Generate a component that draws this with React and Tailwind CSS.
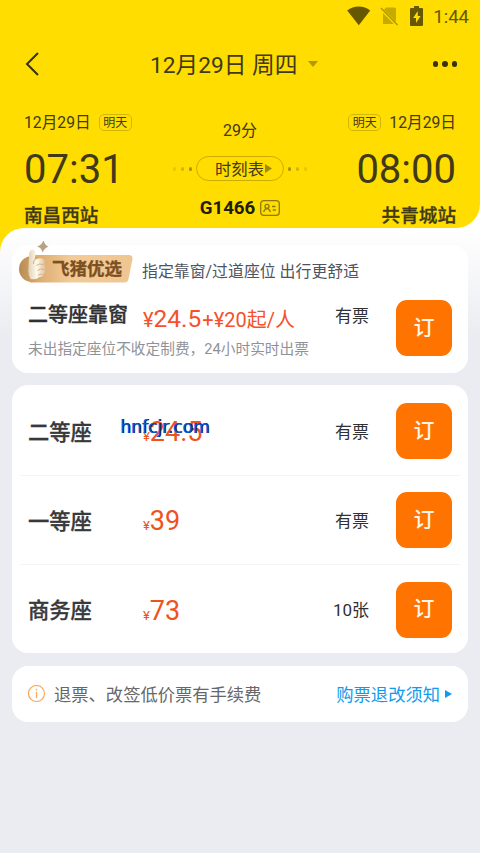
import React from 'react';

const seats = [
  { name: '二等座', price: '24.5', stock: '有票', watermark: true },
  { name: '一等座', price: '39', stock: '有票' },
  { name: '商务座', price: '73', stock: '10张' },
];

function StatusBar() {
  return (
    <div className="flex h-8 items-center justify-end pr-[11px] text-[#665800]">
      <svg className="mr-[9px] h-5 w-6" viewBox="0 0 24 20" fill="currentColor">
        <path d="M0.2 4.5C3.5 1.8 7.6.5 11.8.5s8.200 1.300 11.400 4L11.800 19.300z" />
      </svg>
      <svg className="mr-[12px] h-5 w-[18px]" viewBox="0 0 18 20" fill="none">
        <path d="M6 1.500h8.500q1.500 0 1.500 1.500v15H3V5z" fill="#c5ab00" />
        <path d="M.5 2.500L17.300 19.300" stroke="#ffdd00" strokeWidth="3" />
        <path d="M1 2L17.500 19" stroke="#ad9600" strokeWidth="1.300" />
      </svg>
      <svg className="mr-[10px] h-5 w-[13px]" viewBox="0 0 13 20">
        <path d="M4 0h5v2h3q1 0 1 1v16q0 1-1 1H1q-1 0-1-1V3q0-1 1-1h3z" fill="#665800" />
        <path d="M7.800 5L3 12h3v5l4.600-7H7.800z" fill="#ffdd00" />
      </svg>
      <span className="pt-[2px] text-[18.500px] leading-5">1:44</span>
    </div>
  );
}

function Badge() {
  return (
    <span className="flex h-[17px] w-[33px] items-center justify-center rounded-[5px] border border-[#d2b70b] pt-px text-[12px] leading-none">
      明天
    </span>
  );
}

function Dots({ flip }) {
  return (
    <span className={flip ? 'flex rotate-180 gap-[5px]' : 'flex gap-[5px]'}>
      <i className="h-1 w-[3px] rounded-full bg-[#e6c800]" />
      <i className="h-1 w-[3px] rounded-full bg-[#d2b600]" />
      <i className="h-1 w-[3px] rounded-full bg-[#aa9409]" />
    </span>
  );
}

function Header() {
  return (
    <header className="h-[228px] rounded-br-[24px] bg-[#ffdd00] text-[#40391a]">
      <StatusBar />
      <div className="flex h-[64px] items-center pr-[23px] pl-[25px]">
        <svg className="h-6 w-[14px]" viewBox="0 0 14 24" fill="none" stroke="#35300f" strokeWidth="2">
          <path d="M13 1L2 12l11 11" />
        </svg>
        <h1 className="ml-[111px] pt-[4px] text-[22.700px] leading-8 whitespace-nowrap">12月29日 周四</h1>
        <svg className="ml-[11px] h-[6px] w-[10px]" viewBox="0 0 10 6">
          <path d="M0 0h10L5 6z" fill="#af9909" />
        </svg>
        <div className="ml-auto flex gap-[4px]">
          <i className="size-[5.500px] rounded-full bg-[#38320d]" />
          <i className="size-[5.500px] rounded-full bg-[#38320d]" />
          <i className="size-[5.500px] rounded-full bg-[#38320d]" />
        </div>
      </div>
      <div className="flex justify-between px-6 pt-[16px]">
        <div className="w-[120px]">
          <div className="flex h-5 items-center gap-[8px] text-[15.700px] whitespace-nowrap">
            <span className="pt-[2px]">12月29日</span>
            <Badge />
          </div>
          <div className="mt-[15px] h-[46px] text-[40px] leading-[46px]">07:31</div>
          <div className="mt-[11px] text-[18.600px] leading-6 font-medium [-webkit-text-stroke:0.3px]">南昌西站</div>
        </div>
        <div className="flex flex-col items-center pt-[6px]">
          <div className="h-6 pt-px text-[16px] leading-6">29分</div>
          <div className="mt-[14px] flex items-center gap-[4px]">
            <Dots />
            <div className="flex h-[25px] w-[88px] items-center justify-center rounded-full border border-[#c9ae00] pl-[7px] text-[16.300px] leading-none">
              <span className="pt-[3px]">时刻表</span>
              <svg className="ml-[1px] h-[9px] w-[7px]" viewBox="0 0 7 9">
                <path d="M0 0l7 4.500L0 9z" fill="#a18c0a" />
              </svg>
            </div>
            <Dots flip />
          </div>
          <div className="mt-[15px] flex h-6 items-center gap-[5px] text-[18.700px] font-bold text-[#211d08]">
            <span className="pt-px">G1466</span>
            <svg className="h-4 w-5" viewBox="0 0 20 16" fill="none" stroke="#8c7a0c" strokeWidth="1.300">
              <rect x=".7" y=".7" width="18.600" height="14.600" rx="3" />
              <circle cx="7" cy="6.300" r="2" />
              <path d="M3.700 12q.6-3.300 3.300-3.300t3.300 3.300M12 6.500h3.500M12.800 10h3" />
            </svg>
          </div>
        </div>
        <div className="flex w-[120px] flex-col items-end">
          <div className="flex h-5 items-center gap-[8px] text-[15.700px] whitespace-nowrap">
            <Badge />
            <span className="pt-[2px]">12月29日</span>
          </div>
          <div className="mt-[15px] h-[46px] text-[40px] leading-[46px]">08:00</div>
          <div className="mt-[11px] text-[18.600px] leading-6 font-medium [-webkit-text-stroke:0.3px]">共青城站</div>
        </div>
      </div>
    </header>
  );
}

function BookButton() {
  return (
    <button className="flex size-14 shrink-0 items-center justify-center rounded-[11px] bg-[#ff7300] pt-px text-[21px] font-medium text-[#fff5e8]">
      订
    </button>
  );
}

function Ribbon() {
  return (
    <div className="relative h-[42px] w-[116px]">
      <svg className="absolute inset-0 h-[42px] w-[116px]" viewBox="0 0 116 42">
        <defs>
          <linearGradient id="ribbon" x1="0" x2="1">
            <stop offset="0" stopColor="#d6a467" />
            <stop offset=".4" stopColor="#f3cb98" />
            <stop offset="1" stopColor="#efc691" />
          </linearGradient>
          <linearGradient id="coin" x1="0" x2="1">
            <stop offset="0" stopColor="#b88b51" />
            <stop offset="1" stopColor="#dfb77e" />
          </linearGradient>
          <linearGradient id="hand" x1="0" x2="1">
            <stop offset="0" stopColor="#e3cfb3" />
            <stop offset=".5" stopColor="#fff9ed" />
            <stop offset="1" stopColor="#dfbd91" />
          </linearGradient>
        </defs>
        <path d="M12 14h99q4 0 3.500 4l-4 20q-.8 3.500-4 3.500H12z" fill="url(#ribbon)" />
        <circle cx="14" cy="28" r="13" fill="url(#coin)" />
        <path d="M11 12q1.500-4 4.500-3 3 1 2 5l-1 5q5-3 9-1 3 3 0 5 3 2 1.500 5 1 4-1.500 5 0 3-4 3-3 3-9 2-3-5-2-12 0-5 .5-9z" fill="url(#hand)" />
        <path d="M16.500 19q-1.500 2-1 4M25 23.500q-4-1.500-6.500 1M26 28.500q-4-1.500-6.500 1M24.500 33.500q-3-1-4.500 1" fill="none" stroke="#cbae87" strokeWidth=".9" />
        <path d="M25.500 -1q1 5 5 6.500-4 1.500-6 6-1-5-5.500-6 5-1.500 6.500-6.500z" fill="#b8a184" />
      </svg>
      <span className="absolute top-[15px] left-[34px] text-[17.500px] leading-[26px] font-bold text-[#7d501f] [-webkit-text-stroke:0.3px]">
        飞猪优选
      </span>
    </div>
  );
}

export default function App() {
  return (
    <div
      lang="zh-CN"
      className="h-[853px] w-[480px] overflow-hidden bg-white font-['Roboto','Noto_Sans_CJK_SC',sans-serif]"
    >
      <Header />
      <div className="bg-[linear-gradient(to_right,#ffdd00_50%,transparent_50%)]">
        <main className="h-[625px] rounded-tl-[24px] bg-[linear-gradient(to_bottom,#ffffff_0,#ebecf1_110px)] px-3 pt-[17px]">
          <section className="flow-root h-[128px] rounded-[16px] bg-white">
            <div className="-mt-[4px] flex h-[42px] pl-[6px]">
              <Ribbon />
              <span className="ml-[8px] pt-[19px] text-[15.900px] leading-6 whitespace-nowrap text-[#505461]">
                指定靠窗/过道座位 出行更舒适
              </span>
            </div>
            <div className="flex px-4 pt-[4px]">
              <div className="w-[307px]">
                <div className="flex h-[50px] items-center pt-[14px]">
                  <b className="w-[115px] pb-[9px] text-[20px] font-medium whitespace-nowrap text-[#303133] [-webkit-text-stroke:0.3px]">
                    二等座靠窗
                  </b>
                  <div className="flex items-baseline whitespace-nowrap text-[#f4512c]">
                    <span className="text-[20px]">¥</span>
                    <span className="text-[24.500px]">24.5</span>
                    <span className="ml-[1px] text-[20px]">+¥20起/人</span>
                  </div>
                </div>
                <p className="text-[14.700px] leading-6 whitespace-nowrap text-[#909299]">
                  未出指定座位不收定制费，24小时实时出票
                </p>
              </div>
              <span className="w-[61px] pt-[17px] text-[17px] leading-6 text-[#303238]">有票</span>
              <div className="pt-[13px]">
                <BookButton />
              </div>
            </div>
          </section>

          <section className="mt-3 h-[268px] rounded-[16px] bg-white px-2 pt-[2px]">
            {seats.map((seat) => (
              <div
                key={seat.name}
                className="flex h-[89px] items-center border-b border-[#f3f4f7] pr-2 pl-2 last:border-b-0"
              >
                <b className="w-[115px] pt-[3px] text-[21.300px] font-medium text-[#38393b] [-webkit-text-stroke:0.3px]">
                  {seat.name}
                </b>
                <div className="relative flex items-baseline pt-[2px] text-[#ee531c]">
                  <span className="text-[13px]">¥</span>
                  <span className="text-[27px] leading-8">{seat.price}</span>
                  {seat.watermark && (
                    <span className="absolute top-[1px] -left-[23px] font-['DejaVu_Sans',sans-serif] text-[17px] leading-6 tracking-[0.05px] text-[#0758d6] [text-shadow:1px_0_0_#082653]">
                      hnfcjr.com
                    </span>
                  )}
                </div>
                <span className="mr-[27px] ml-auto pt-[3px] text-[17px] text-[#303133]">{seat.stock}</span>
                <BookButton />
              </div>
            ))}
          </section>

          <section className="mt-[13px] flex h-[56px] items-center rounded-[16px] bg-white pr-[16px] pl-[16px]">
            <svg className="size-[18px]" viewBox="0 0 18 18" fill="none" stroke="#f7aa5e" strokeWidth="1.200">
              <circle cx="8.500" cy="8.500" r="8" />
              <path d="M8.500 7v6M8.500 3.800v1.600" strokeWidth="1.300" />
            </svg>
            <span className="ml-[8px] pt-[3px] text-[17.300px] whitespace-nowrap text-[#666769]">
              退票、改签低价票有手续费
            </span>
            <a className="ml-auto flex items-center gap-[5px] text-[17.300px] whitespace-nowrap text-[#109bed]">
              <span className="pt-[3px]">购票退改须知</span>
              <svg className="h-[8px] w-[7px]" viewBox="0 0 7 8">
                <path d="M0 0l7 4-7 4z" fill="#109bed" />
              </svg>
            </a>
          </section>
        </main>
      </div>
    </div>
  );
}
